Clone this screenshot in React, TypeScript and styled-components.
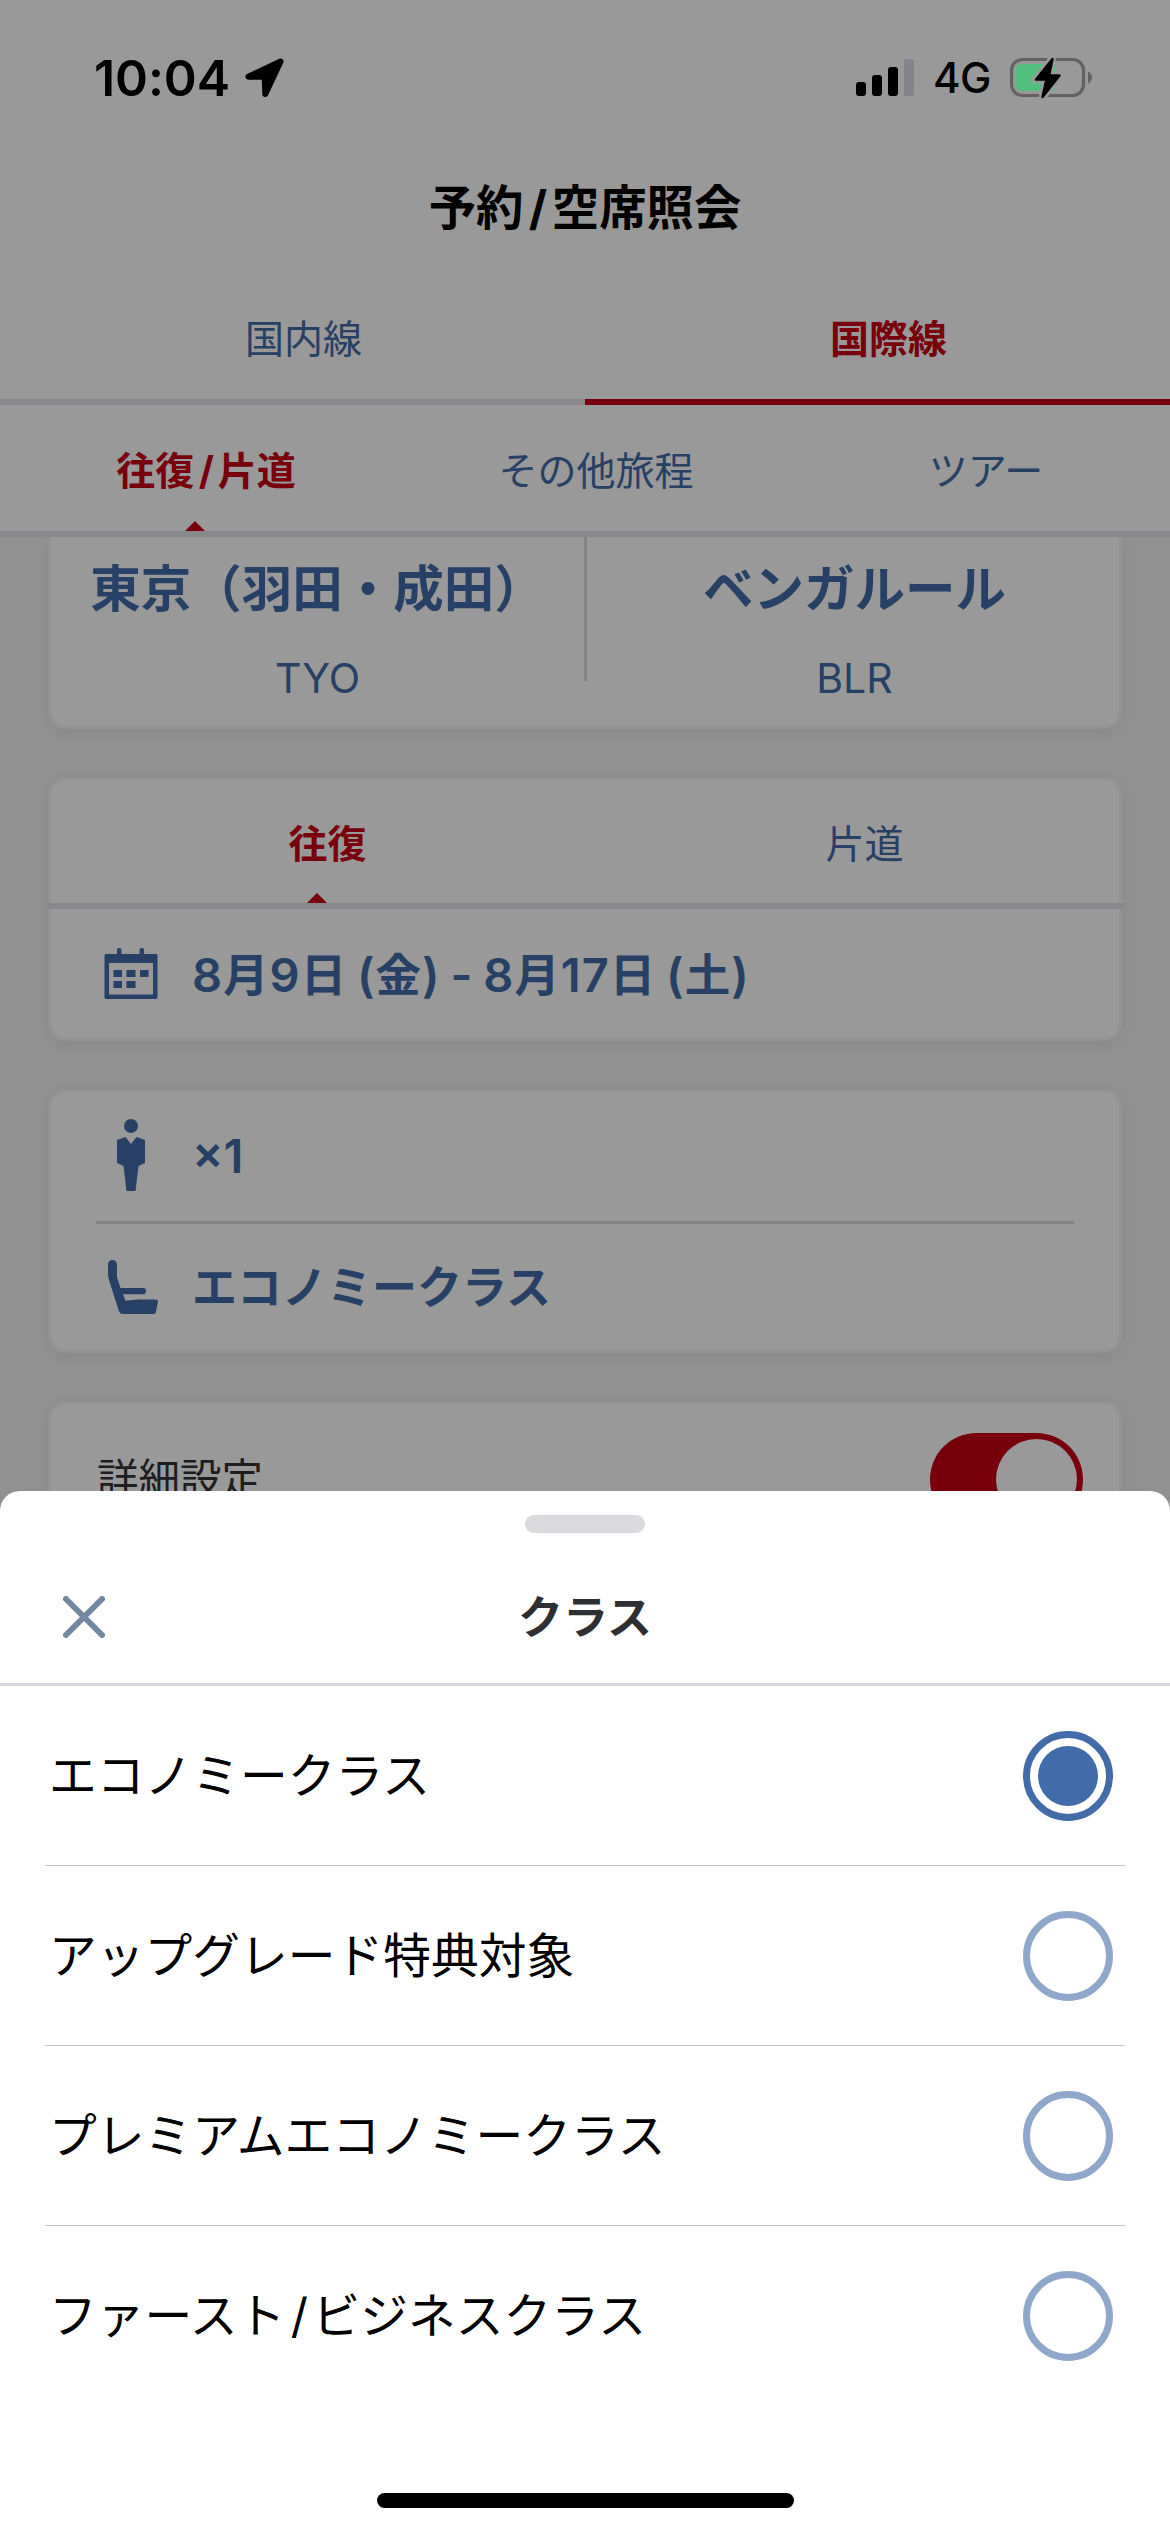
import React from "react";
import styled, { createGlobalStyle, css } from "styled-components";

const color = {
  red: "#c80014",
  blue: "#416ba9",
  ink: "#333336",
  line: "#e3e3e6",
  divider: "#dadae0",
  page: "#f2f2f2",
};

const Global = createGlobalStyle`
  body { margin: 0; background: #fff; }
  * { box-sizing: border-box; }
`;

const Phone = styled.div`
  position: relative;
  width: 1170px;
  height: 2532px;
  overflow: hidden;
  background: ${color.page};
  font-family: Inter, "Noto Sans CJK JP", sans-serif;
  color: #000;
  line-height: 1;
  white-space: nowrap;
`;

const Page = styled.main`
  display: flex;
  flex-direction: column;
`;

const StatusBar = styled.div`
  position: relative;
  z-index: 2;
  display: flex;
  justify-content: space-between;
  align-items: center;
  height: 141px;
  padding: 15px 78px 0 94px;
`;

const Clock = styled.div`
  display: flex;
  align-items: center;
  gap: 15px;
  font-size: 50px;
  font-weight: 600;
  letter-spacing: -0.1px;
`;

const Indicators = styled.div`
  display: flex;
  align-items: center;
  gap: 19px;
  font-size: 42px;
  font-weight: 500;
  letter-spacing: -0.5px;
`;

const Top = styled.header`
  background: #fff;
`;

const ScreenTitle = styled.h1`
  display: flex;
  align-items: center;
  justify-content: center;
  height: 132px;
  margin: 0;
  padding-top: 2px;
  font-size: 47.4px;
  font-weight: 700;
`;

const Slash = styled.span`
  margin: 0 0.1em 0 0.11em;
`;

const TabRow = styled.nav<{ $height: number }>`
  display: flex;
  height: ${(p) => p.$height}px;
`;

const Tab = styled.div<{ $active?: boolean; $underline?: boolean }>`
  position: relative;
  flex: 1;
  display: flex;
  align-items: center;
  justify-content: center;
  padding: 4px 0 0 22px;
  border-bottom: 6px solid
    ${(p) => (p.$active && p.$underline ? color.red : color.line)};
  font-size: 39px;
  font-weight: ${(p) => (p.$active ? 700 : 400)};
  color: ${(p) => (p.$active ? color.red : color.blue)};
  ${(p) =>
    p.$active &&
    !p.$underline &&
    css`
      &::after {
        content: "";
        position: absolute;
        left: calc(50% - 10px);
        bottom: 0;
        border: 10px solid transparent;
        border-top: 0;
        border-bottom-color: ${color.red};
      }
    `}
`;

const Cards = styled.section`
  display: flex;
  flex-direction: column;
  gap: 48px;
  height: 1995px;
  padding: 0 48px;
  overflow: hidden;
`;

const Card = styled.div<{ $height: number; $flatTop?: boolean }>`
  display: flex;
  flex-direction: column;
  flex: none;
  height: ${(p) => p.$height}px;
  border: 3px solid #f6f6f6;
  ${(p) => p.$flatTop && "border-top: 0;"}
  border-radius: ${(p) => (p.$flatTop ? "0 0 18px 18px" : "18px")};
  background: #fff;
  background-clip: padding-box;
  box-shadow: 0 3px 18px rgba(0, 0, 0, 0.07);
`;

const Route = styled.div`
  display: grid;
  grid-template-columns: 533px 3px 1fr;
  align-items: start;
`;

const RouteLine = styled.div`
  height: 144px;
  background: ${color.divider};
`;

const Airport = styled.div<{ $shift?: number }>`
  display: flex;
  flex-direction: column;
  align-items: center;
  padding-left: ${(p) => p.$shift ?? 0}px;
  color: ${color.blue};
`;

const City = styled.div`
  margin-top: 26px;
  font-size: 50.5px;
  line-height: 51px;
  font-weight: 700;
`;

const Code = styled.div`
  margin-top: 43px;
  font-size: 41px;
  line-height: 42px;
`;

const CardTabs = styled(TabRow)`
  flex: none;
  margin: 0 -3px;
`;

const Detail = styled.div<{ $height: number }>`
  display: flex;
  align-items: center;
  height: ${(p) => p.$height}px;
  padding-left: 47px;
  font-size: 45px;
  font-weight: 700;
  color: ${color.blue};
`;

const DetailIcon = styled.div<{ $indent?: number }>`
  display: flex;
  align-items: center;
  justify-content: center;
  width: 66px;
  margin-right: 28px;
  padding-left: ${(p) => p.$indent ?? 0}px;
`;

const DateText = styled.span`
  padding-top: 2px;
  font-size: 45.5px;
  letter-spacing: 1px;
  word-spacing: -3px;
`;

const Numeric = styled.span`
  font-size: 47px;
  font-weight: 600;
`;

const DetailRule = styled.div`
  height: 3px;
  margin: 3px 45px 0;
  background: ${color.divider};
`;

const Setting = styled.div`
  display: flex;
  align-items: flex-start;
  justify-content: space-between;
  padding: 29px 36px 0 46px;
  font-size: 41.5px;
  line-height: 93px;
  color: ${color.ink};
`;

const Toggle = styled.div`
  display: flex;
  justify-content: flex-end;
  width: 153px;
  height: 93px;
  padding: 6px;
  border-radius: 47px;
  background: ${color.red};
`;

const Knob = styled.div`
  width: 81px;
  height: 81px;
  border-radius: 50%;
  background: #fff;
`;

const Scrim = styled.div`
  position: absolute;
  inset: 0;
  z-index: 1;
  background: rgba(0, 0, 0, 0.4);
`;

const Sheet = styled.section`
  position: absolute;
  z-index: 3;
  left: 0;
  right: 0;
  bottom: 0;
  height: 1041px;
  display: flex;
  flex-direction: column;
  align-items: center;
  border-radius: 20px 20px 0 0;
  background: #fff;
`;

const Handle = styled.div`
  width: 120px;
  height: 18px;
  margin-top: 24px;
  border-radius: 9px;
  background: #d9d9de;
`;

const SheetHeader = styled.div`
  display: grid;
  grid-template-columns: 42px 1fr 42px;
  align-items: center;
  justify-items: center;
  align-self: stretch;
  height: 153px;
  padding: 18px 63px 0;
  border-bottom: 3px solid #d6d6da;
  font-size: 45px;
  font-weight: 700;
  color: #2e2f32;
`;

const Options = styled.div`
  align-self: stretch;
  padding: 0 45px;
`;

const Option = styled.div`
  display: flex;
  align-items: center;
  justify-content: space-between;
  height: 180px;
  padding: 0 12px 0 4px;
  border-bottom: 1px solid #c6c6c8;
  font-size: 47.75px;
  &:last-child {
    border-bottom-color: transparent;
  }
`;

const OptionLabel = styled.span`
  padding-top: 3px;
`;

const Radio = styled.div<{ $checked: boolean }>`
  display: grid;
  place-items: center;
  width: 90px;
  height: 90px;
  border: 7px solid ${(p) => (p.$checked ? "#426ba9" : "#8fa7cb")};
  border-radius: 50%;
`;

const RadioDot = styled.div`
  width: 60px;
  height: 60px;
  border-radius: 50%;
  background: #426ba9;
`;

const HomeIndicator = styled.div`
  width: 417px;
  height: 15px;
  margin-top: 87px;
  border-radius: 8px;
  background: #000;
`;

const LocationArrow = () => (
  <svg width="40" height="40" viewBox="0 0 40 40">
    <path
      d="M35.5 3.5 L3.5 18.7 H19.7 L20.3 36 Z"
      stroke="#000"
      strokeWidth="6"
      strokeLinejoin="round"
    />
  </svg>
);

const Signal = () => (
  <svg width="58" height="38" viewBox="0 0 58 38">
    <rect x="0" y="23" width="10" height="14" rx="3" />
    <rect x="16" y="16" width="10" height="21" rx="3" />
    <rect x="32" y="8" width="10" height="29" rx="3" />
    <rect x="48" y="0" width="10" height="37" rx="3" fill="#84828a" />
  </svg>
);

const Battery = () => (
  <svg width="82" height="42" viewBox="0 0 82 42">
    <rect x="1.5" y="2.5" width="72" height="36" rx="11" fill="none" stroke="#626264" strokeWidth="3.2" />
    <path d="M78 14.5 q4 2 4 6 t-4 6 z" fill="#626264" />
    <path d="M12 7 H45 V34 H12 q-6 0-6-6 V13 q0-6 6-6z" fill="#52c07d" />
    <path
      d="M42.5 1 L25 23 H36 L32 41 L50.5 18.5 H39.5 Z"
      fill="#000"
      stroke="#999"
      strokeWidth="7"
      strokeLinejoin="round"
    />
    <path
      d="M42.5 2 L26 22.5 H36.5 L32.5 40 L49.5 18.5 H39 Z"
      stroke="#000"
      strokeWidth="2.5"
      strokeLinejoin="round"
    />
  </svg>
);

const CalendarIcon = () => (
  <svg width="54" height="51" viewBox="0 0 54 51" fill={color.blue}>
    <rect x="13" y="0" width="4.5" height="9" rx="2" />
    <rect x="35.5" y="0" width="4.5" height="9" rx="2" />
    <path
      fillRule="evenodd"
      d="M2 6 H52 Q53.5 6 53.5 8 V49 Q53.5 51 52 51 H2 Q.5 51 .5 49 V8 Q.5 6 2 6Z M5 15 V46.5 H49 V15Z"
    />
    <rect x="9.5" y="22" width="8.5" height="7" />
    <rect x="22.5" y="22" width="9" height="7" />
    <rect x="36" y="22" width="8.5" height="7" />
    <rect x="9.5" y="33" width="8.5" height="7" />
    <rect x="22.5" y="33" width="9" height="7" />
  </svg>
);

const PersonIcon = () => (
  <svg width="28" height="72" viewBox="0 0 28 72" fill={color.blue}>
    <circle cx="14" cy="7" r="7" />
    <path d="M8.500 18 L14 25 L19.500 18 L28 21 V44 L21.5 47 L18.5 72 H9.500 L6.5 47 L0 44 V21 Z" />
  </svg>
);

const SeatIcon = () => (
  <svg width="50" height="54" viewBox="0 0 50 54" fill={color.blue}>
    <path d="M0 4.5 A4.5 4.5 0 0 1 9 4.5 V17 L12.5 28 H35 A3.1 3.1 0 0 1 35 34.2 H15 L17.5 40.8 L30 39.5 H48 Q50 39.5 50 41.5 L48 51.5 Q47.5 54 45.5 54 H15 Q12 54 11 51.5 L1 20 Q0 17.5 0 14 Z" />
  </svg>
);

const CloseIcon = () => (
  <svg width="42" height="42" viewBox="0 0 42 42">
    <path d="M3 3 L39 39 M39 3 L3 39" stroke="#7487a2" strokeWidth="6" strokeLinecap="round" />
  </svg>
);

const classes: React.ReactNode[] = [
  "エコノミークラス",
  "アップグレード特典対象",
  "プレミアムエコノミークラス",
  <span key="first">
    ファースト<Slash>/</Slash>ビジネスクラス
  </span>,
];

export default function App() {
  return (
    <Phone>
      <Global />
      <Page>
        <Top>
          <StatusBar>
            <Clock>
              10:04
              <LocationArrow />
            </Clock>
            <Indicators>
              <Signal />
              4G
              <Battery />
            </Indicators>
          </StatusBar>
          <ScreenTitle>
            予約<Slash>/</Slash>空席照会
          </ScreenTitle>
          <TabRow $height={132}>
            <Tab>国内線</Tab>
            <Tab $active $underline>
              国際線
            </Tab>
          </TabRow>
          <TabRow $height={132}>
            <Tab $active>
              往復<Slash>/</Slash>片道
            </Tab>
            <Tab>その他旅程</Tab>
            <Tab>ツアー</Tab>
          </TabRow>
        </Top>
        <Cards>
          <Card $height={192} $flatTop>
            <Route>
              <Airport>
                <City>東京（羽田・成田）</City>
                <Code>TYO</Code>
              </Airport>
              <RouteLine />
              <Airport $shift={3}>
                <City>ベンガルール</City>
                <Code>BLR</Code>
              </Airport>
            </Route>
          </Card>
          <Card $height={264}>
            <CardTabs $height={129}>
              <Tab $active>往復</Tab>
              <Tab>片道</Tab>
            </CardTabs>
            <Detail $height={129}>
              <DetailIcon>
                <CalendarIcon />
              </DetailIcon>
              <DateText>
                <Numeric>8</Numeric>月<Numeric>9</Numeric>日<Numeric> (</Numeric>金
                <Numeric>) - 8</Numeric>月<Numeric>17</Numeric>日<Numeric> (</Numeric>土
                <Numeric>)</Numeric>
              </DateText>
            </Detail>
          </Card>
          <Card $height={264}>
            <Detail $height={126}>
              <DetailIcon>
                <PersonIcon />
              </DetailIcon>
              <Numeric>×1</Numeric>
            </Detail>
            <DetailRule />
            <Detail $height={126}>
              <DetailIcon $indent={4}>
                <SeatIcon />
              </DetailIcon>
              エコノミークラス
            </Detail>
          </Card>
          <Card $height={300}>
            <Setting>
              詳細設定
              <Toggle>
                <Knob />
              </Toggle>
            </Setting>
          </Card>
        </Cards>
      </Page>
      <Scrim />
      <Sheet>
        <Handle />
        <SheetHeader>
          <CloseIcon />
          クラス
        </SheetHeader>
        <Options>
          {classes.map((label, i) => (
            <Option key={i}>
              <OptionLabel>{label}</OptionLabel>
              <Radio $checked={i === 0}>{i === 0 && <RadioDot />}</Radio>
            </Option>
          ))}
        </Options>
        <HomeIndicator />
      </Sheet>
    </Phone>
  );
}
